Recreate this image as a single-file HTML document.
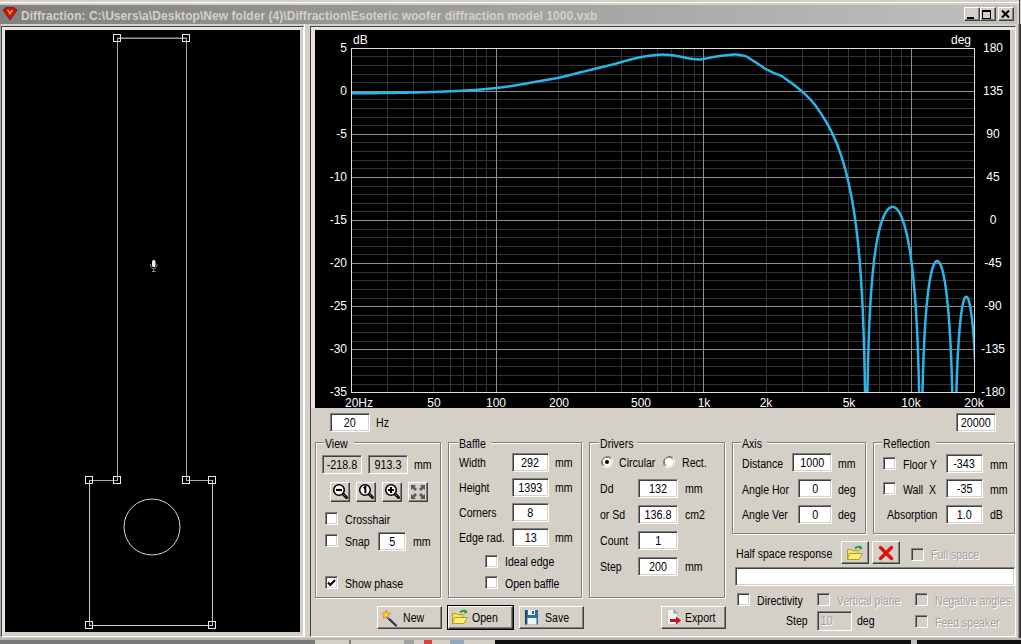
<!DOCTYPE html><html><head><meta charset="utf-8"><style>
*{box-sizing:border-box}
html,body{margin:0;padding:0}
body{width:1021px;height:644px;overflow:hidden;position:relative;background:#d4d0c8;font-family:"Liberation Sans",sans-serif;font-size:11px;color:#000}
.a{position:absolute}
.t{position:absolute;white-space:nowrap;line-height:13px}
.u{font-size:12px;transform:scaleX(.88);transform-origin:0 0}
.v{display:inline-block;font-size:12px;transform:scaleX(.9);position:relative;top:1px}
.ed{position:absolute;background:#fff;border:1px solid;border-color:#808080 #fff #fff #808080;box-shadow:inset 1px 1px #404040, inset -1px -1px #d4d0c8;text-align:center;line-height:17px;white-space:nowrap}
.ro{background:#d4d0c8}
.cb{position:absolute;width:13px;height:13px;background:#fff;border:1px solid;border-color:#808080 #fff #fff #808080;box-shadow:inset 1px 1px #404040, inset -1px -1px #d4d0c8}
.cbd{background:#d4d0c8}
.bt{position:absolute;background:#d4d0c8;border:1px solid;border-color:#fff #404040 #404040 #fff;box-shadow:inset -1px -1px #808080}
.grp{position:absolute;border:1px solid;border-color:#808080 #fff #fff #808080;box-shadow:inset 1px 1px #fff, inset -1px -1px #808080}
.gl{position:absolute;background:#d4d0c8;padding:0 2px;line-height:13px;white-space:nowrap}
.dis{color:#a0a0a0;text-shadow:1px 1px #fff}
</style></head><body>

<div class="a" style="left:0;top:2px;width:1019px;height:1px;background:#fff"></div>
<div class="a" style="left:0;top:5px;width:1017px;height:19px;background:linear-gradient(to right,#808080,#c0c0c0)"></div>
<div class="a" style="left:1019px;top:0;width:1px;height:644px;background:#404040"></div>
<div class="a" style="left:1020px;top:0;width:1px;height:24px;background:#d4d0c8"></div>
<div class="a" style="left:1020px;top:24px;width:1px;height:620px;background:#383838"></div>
<div class="a" style="left:1018px;top:24px;width:1px;height:614px;background:#9a9a9a"></div>
<svg class="a" style="left:2px;top:7px" width="16" height="14" viewBox="0 0 16 14"><path d="M1 3 L4 0.5 H12 L15 3 L8 13 Z" fill="#d01010" stroke="#801010" stroke-width="0.8"/><path d="M5 3 L8 8 L11 3 L9.5 3 L8 5.5 L6.5 3Z" fill="#ffd020"/></svg>
<div class="t" style="left:21px;top:10px;letter-spacing:.05px;font-weight:bold;color:#d4d0c8;font-size:12px" id="title">Diffraction: C:\Users\a\Desktop\New folder (4)\Diffraction\Esoteric woofer diffraction model 1000.vxb</div>
<div class="bt" style="left:964px;top:7px;width:16px;height:14px"></div>
<div class="bt" style="left:980px;top:7px;width:16px;height:14px"></div>
<div class="bt" style="left:998px;top:7px;width:16px;height:14px"></div>
<div class="a" style="left:967px;top:17px;width:7px;height:2px;background:#000"></div>
<div class="a" style="left:982px;top:10px;width:9px;height:9px;border:1px solid #000;border-top-width:2px"></div>
<svg class="a" style="left:1001px;top:10px" width="9" height="8" viewBox="0 0 9 8"><path d="M1 0.5 L8 7.5 M8 0.5 L1 7.5" stroke="#000" stroke-width="2"/></svg>
<div class="a" style="left:0;top:24px;width:1px;height:614px;background:#a8a8a8"></div>
<div class="a" style="left:1px;top:26px;width:303px;height:611px;border:1px solid;border-color:#404040 #fff #fff #404040"></div>
<div class="a" style="left:2px;top:27px;width:301px;height:609px;border:3px solid #e8e6e0;border-right-color:#d4d0c8;border-bottom-color:#d4d0c8"></div>
<div class="a" style="left:5px;top:30px;width:295px;height:602px;background:#000"></div>
<div class="a" style="left:304px;top:24px;width:1px;height:613px;background:#fff"></div>
<div class="a" style="left:310px;top:26px;width:706px;height:611px;border:1px solid;border-color:#404040 #fff #fff #404040"></div>
<div class="a" style="left:311px;top:27px;width:4px;height:381px;background:#e8e6e0"></div>
<div class="a" style="left:311px;top:27px;width:704px;height:3px;background:#e8e6e0"></div>
<div class="a" style="left:0;top:638px;width:1021px;height:2px;background:#b8b6b0"></div>
<div class="a" style="left:0;top:640px;width:315px;height:4px;background:#7a7a7a"></div>
<div class="a" style="left:349px;top:640px;width:2px;height:4px;background:#808080"></div>
<div class="a" style="left:404px;top:640px;width:10px;height:4px;background:#a0a0a0"></div>
<div class="a" style="left:424px;top:640px;width:8px;height:4px;background:#e04040"></div>
<div class="a" style="left:450px;top:640px;width:14px;height:4px;background:#90a8c0"></div>
<div class="a" style="left:495px;top:640px;width:526px;height:4px;background:#101010"></div>
<div class="a" style="left:911px;top:640px;width:6px;height:4px;background:#c0c0c0"></div>
<svg class="a" style="left:0;top:0" width="1021" height="644" viewBox="0 0 1021 644"><line x1="117" y1="38.2" x2="187" y2="38.2" stroke="#9a9a9a" stroke-width="1.6"/><line x1="117.5" y1="38" x2="117.5" y2="481" stroke="#a8a8a8" stroke-width="1"/><line x1="186.5" y1="38" x2="186.5" y2="481" stroke="#a8a8a8" stroke-width="1"/><line x1="89" y1="480.5" x2="118" y2="480.5" stroke="#a8a8a8" stroke-width="1"/><line x1="186" y1="480.5" x2="213" y2="480.5" stroke="#a8a8a8" stroke-width="1"/><line x1="89.5" y1="480" x2="89.5" y2="626" stroke="#c8c8c8" stroke-width="1"/><line x1="212.5" y1="480" x2="212.5" y2="626" stroke="#c8c8c8" stroke-width="1"/><line x1="89" y1="625.5" x2="213" y2="625.5" stroke="#c8c8c8" stroke-width="1"/><rect x="113.5" y="34.5" width="7" height="7" fill="none" stroke="#e8e8e8" stroke-width="1"/><rect x="182.5" y="34.5" width="7" height="7" fill="none" stroke="#e8e8e8" stroke-width="1"/><rect x="85.5" y="476.5" width="7" height="7" fill="none" stroke="#e8e8e8" stroke-width="1"/><rect x="113.5" y="476.5" width="7" height="7" fill="none" stroke="#e8e8e8" stroke-width="1"/><rect x="182.5" y="476.5" width="7" height="7" fill="none" stroke="#e8e8e8" stroke-width="1"/><rect x="208.5" y="476.5" width="7" height="7" fill="none" stroke="#e8e8e8" stroke-width="1"/><rect x="85.5" y="621.5" width="7" height="7" fill="none" stroke="#e8e8e8" stroke-width="1"/><rect x="208.5" y="621.5" width="7" height="7" fill="none" stroke="#e8e8e8" stroke-width="1"/><circle cx="152" cy="527" r="28" fill="none" stroke="#d8d8d8" stroke-width="1"/><rect x="152" y="260" width="3.5" height="7" rx="1.5" fill="#f0f0f0"/><path d="M150.5 264 Q150.5 268.5 153.8 268.5 Q157 268.5 157 264" fill="none" stroke="#909090" stroke-width="0.9"/><line x1="153.8" y1="268.5" x2="153.8" y2="271" stroke="#909090" stroke-width="1"/><line x1="152" y1="271.5" x2="155.5" y2="271.5" stroke="#909090" stroke-width="1"/><rect x="315" y="30" width="695" height="378" fill="#000"/><line x1="351" y1="56.5" x2="974" y2="56.5" stroke="#333333" stroke-width="1"/><line x1="351" y1="65.5" x2="974" y2="65.5" stroke="#333333" stroke-width="1"/><line x1="351" y1="74.5" x2="974" y2="74.5" stroke="#333333" stroke-width="1"/><line x1="351" y1="82.5" x2="974" y2="82.5" stroke="#333333" stroke-width="1"/><line x1="351" y1="99.5" x2="974" y2="99.5" stroke="#333333" stroke-width="1"/><line x1="351" y1="108.5" x2="974" y2="108.5" stroke="#333333" stroke-width="1"/><line x1="351" y1="117.5" x2="974" y2="117.5" stroke="#333333" stroke-width="1"/><line x1="351" y1="125.5" x2="974" y2="125.5" stroke="#333333" stroke-width="1"/><line x1="351" y1="142.5" x2="974" y2="142.5" stroke="#333333" stroke-width="1"/><line x1="351" y1="151.5" x2="974" y2="151.5" stroke="#333333" stroke-width="1"/><line x1="351" y1="160.5" x2="974" y2="160.5" stroke="#333333" stroke-width="1"/><line x1="351" y1="168.5" x2="974" y2="168.5" stroke="#333333" stroke-width="1"/><line x1="351" y1="186.5" x2="974" y2="186.5" stroke="#333333" stroke-width="1"/><line x1="351" y1="194.5" x2="974" y2="194.5" stroke="#333333" stroke-width="1"/><line x1="351" y1="203.5" x2="974" y2="203.5" stroke="#333333" stroke-width="1"/><line x1="351" y1="211.5" x2="974" y2="211.5" stroke="#333333" stroke-width="1"/><line x1="351" y1="229.5" x2="974" y2="229.5" stroke="#333333" stroke-width="1"/><line x1="351" y1="237.5" x2="974" y2="237.5" stroke="#333333" stroke-width="1"/><line x1="351" y1="246.5" x2="974" y2="246.5" stroke="#333333" stroke-width="1"/><line x1="351" y1="254.5" x2="974" y2="254.5" stroke="#333333" stroke-width="1"/><line x1="351" y1="272.5" x2="974" y2="272.5" stroke="#333333" stroke-width="1"/><line x1="351" y1="280.5" x2="974" y2="280.5" stroke="#333333" stroke-width="1"/><line x1="351" y1="289.5" x2="974" y2="289.5" stroke="#333333" stroke-width="1"/><line x1="351" y1="298.5" x2="974" y2="298.5" stroke="#333333" stroke-width="1"/><line x1="351" y1="315.5" x2="974" y2="315.5" stroke="#333333" stroke-width="1"/><line x1="351" y1="323.5" x2="974" y2="323.5" stroke="#333333" stroke-width="1"/><line x1="351" y1="332.5" x2="974" y2="332.5" stroke="#333333" stroke-width="1"/><line x1="351" y1="341.5" x2="974" y2="341.5" stroke="#333333" stroke-width="1"/><line x1="351" y1="358.5" x2="974" y2="358.5" stroke="#333333" stroke-width="1"/><line x1="351" y1="366.5" x2="974" y2="366.5" stroke="#333333" stroke-width="1"/><line x1="351" y1="375.5" x2="974" y2="375.5" stroke="#333333" stroke-width="1"/><line x1="351" y1="384.5" x2="974" y2="384.5" stroke="#333333" stroke-width="1"/><line x1="387.5" y1="48" x2="387.5" y2="392" stroke="#333333" stroke-width="1"/><line x1="413.5" y1="48" x2="413.5" y2="392" stroke="#333333" stroke-width="1"/><line x1="433.5" y1="48" x2="433.5" y2="392" stroke="#333333" stroke-width="1"/><line x1="450.5" y1="48" x2="450.5" y2="392" stroke="#333333" stroke-width="1"/><line x1="463.5" y1="48" x2="463.5" y2="392" stroke="#333333" stroke-width="1"/><line x1="476.5" y1="48" x2="476.5" y2="392" stroke="#333333" stroke-width="1"/><line x1="486.5" y1="48" x2="486.5" y2="392" stroke="#333333" stroke-width="1"/><line x1="558.5" y1="48" x2="558.5" y2="392" stroke="#333333" stroke-width="1"/><line x1="595.5" y1="48" x2="595.5" y2="392" stroke="#333333" stroke-width="1"/><line x1="621.5" y1="48" x2="621.5" y2="392" stroke="#333333" stroke-width="1"/><line x1="641.5" y1="48" x2="641.5" y2="392" stroke="#333333" stroke-width="1"/><line x1="657.5" y1="48" x2="657.5" y2="392" stroke="#333333" stroke-width="1"/><line x1="671.5" y1="48" x2="671.5" y2="392" stroke="#333333" stroke-width="1"/><line x1="683.5" y1="48" x2="683.5" y2="392" stroke="#333333" stroke-width="1"/><line x1="694.5" y1="48" x2="694.5" y2="392" stroke="#333333" stroke-width="1"/><line x1="766.5" y1="48" x2="766.5" y2="392" stroke="#333333" stroke-width="1"/><line x1="802.5" y1="48" x2="802.5" y2="392" stroke="#333333" stroke-width="1"/><line x1="828.5" y1="48" x2="828.5" y2="392" stroke="#333333" stroke-width="1"/><line x1="848.5" y1="48" x2="848.5" y2="392" stroke="#333333" stroke-width="1"/><line x1="865.5" y1="48" x2="865.5" y2="392" stroke="#333333" stroke-width="1"/><line x1="879.5" y1="48" x2="879.5" y2="392" stroke="#333333" stroke-width="1"/><line x1="891.5" y1="48" x2="891.5" y2="392" stroke="#333333" stroke-width="1"/><line x1="901.5" y1="48" x2="901.5" y2="392" stroke="#333333" stroke-width="1"/><line x1="351" y1="48.5" x2="974" y2="48.5" stroke="#909090" stroke-width="1"/><line x1="351" y1="91.5" x2="974" y2="91.5" stroke="#909090" stroke-width="1"/><line x1="351" y1="134.5" x2="974" y2="134.5" stroke="#909090" stroke-width="1"/><line x1="351" y1="177.5" x2="974" y2="177.5" stroke="#909090" stroke-width="1"/><line x1="351" y1="220.5" x2="974" y2="220.5" stroke="#909090" stroke-width="1"/><line x1="351" y1="263.5" x2="974" y2="263.5" stroke="#909090" stroke-width="1"/><line x1="351" y1="306.5" x2="974" y2="306.5" stroke="#909090" stroke-width="1"/><line x1="351" y1="349.5" x2="974" y2="349.5" stroke="#909090" stroke-width="1"/><line x1="351" y1="392.5" x2="974" y2="392.5" stroke="#909090" stroke-width="1"/><line x1="496.5" y1="48" x2="496.5" y2="392" stroke="#909090" stroke-width="1"/><line x1="703.5" y1="48" x2="703.5" y2="392" stroke="#909090" stroke-width="1"/><line x1="911.5" y1="48" x2="911.5" y2="392" stroke="#909090" stroke-width="1"/><rect x="351.5" y="48.5" width="623" height="344" fill="none" stroke="#e0e0e0" stroke-width="1"/><clipPath id="pc"><rect x="352" y="49" width="622" height="343"/></clipPath><g clip-path="url(#pc)" fill="none" stroke="#2ab4e8" stroke-width="2.5" stroke-linejoin="round"><path d="M351.0 93.32 L351.5 93.32 L352.0 93.32 L352.5 93.32 L353.0 93.32 L353.5 93.32 L354.0 93.32 L354.5 93.32 L355.0 93.32 L355.5 93.32 L356.0 93.32 L356.5 93.31 L357.0 93.31 L357.5 93.31 L358.0 93.31 L358.5 93.30 L359.0 93.30 L359.5 93.30 L360.0 93.30 L360.5 93.29 L361.0 93.29 L361.5 93.29 L362.0 93.28 L362.5 93.28 L363.0 93.28 L363.5 93.27 L364.0 93.27 L364.5 93.26 L365.0 93.26 L365.5 93.25 L366.0 93.25 L366.5 93.24 L367.0 93.24 L367.5 93.24 L368.0 93.23 L368.5 93.23 L369.0 93.22 L369.5 93.21 L370.0 93.21 L370.5 93.20 L371.0 93.20 L371.5 93.19 L372.0 93.19 L372.5 93.18 L373.0 93.17 L373.5 93.17 L374.0 93.16 L374.5 93.16 L375.0 93.15 L375.5 93.14 L376.0 93.14 L376.5 93.13 L377.0 93.13 L377.5 93.12 L378.0 93.11 L378.5 93.11 L379.0 93.10 L379.5 93.09 L380.0 93.09 L380.5 93.08 L381.0 93.07 L381.5 93.07 L382.0 93.06 L382.5 93.05 L383.0 93.05 L383.5 93.04 L384.0 93.03 L384.5 93.03 L385.0 93.02 L385.5 93.01 L386.0 93.01 L386.5 93.00 L387.0 92.99 L387.5 92.99 L388.0 92.98 L388.5 92.97 L389.0 92.97 L389.5 92.96 L390.0 92.95 L390.5 92.95 L391.0 92.94 L391.5 92.93 L392.0 92.93 L392.5 92.92 L393.0 92.91 L393.5 92.90 L394.0 92.90 L394.5 92.89 L395.0 92.88 L395.5 92.87 L396.0 92.86 L396.5 92.86 L397.0 92.85 L397.5 92.84 L398.0 92.83 L398.5 92.82 L399.0 92.81 L399.5 92.80 L400.0 92.79 L400.5 92.78 L401.0 92.78 L401.5 92.77 L402.0 92.76 L402.5 92.75 L403.0 92.74 L403.5 92.73 L404.0 92.72 L404.5 92.71 L405.0 92.70 L405.5 92.69 L406.0 92.68 L406.5 92.67 L407.0 92.66 L407.5 92.65 L408.0 92.64 L408.5 92.62 L409.0 92.61 L409.5 92.60 L410.0 92.59 L410.5 92.58 L411.0 92.57 L411.5 92.56 L412.0 92.55 L412.5 92.53 L413.0 92.52 L413.5 92.51 L414.0 92.50 L414.5 92.49 L415.0 92.48 L415.5 92.46 L416.0 92.45 L416.5 92.44 L417.0 92.43 L417.5 92.41 L418.0 92.40 L418.5 92.39 L419.0 92.38 L419.5 92.36 L420.0 92.35 L420.5 92.34 L421.0 92.32 L421.5 92.31 L422.0 92.30 L422.5 92.28 L423.0 92.27 L423.5 92.26 L424.0 92.24 L424.5 92.23 L425.0 92.21 L425.5 92.20 L426.0 92.19 L426.5 92.17 L427.0 92.16 L427.5 92.14 L428.0 92.13 L428.5 92.11 L429.0 92.10 L429.5 92.09 L430.0 92.07 L430.5 92.06 L431.0 92.04 L431.5 92.03 L432.0 92.01 L432.5 91.99 L433.0 91.98 L433.5 91.96 L434.0 91.95 L434.5 91.93 L435.0 91.91 L435.5 91.90 L436.0 91.88 L436.5 91.86 L437.0 91.85 L437.5 91.83 L438.0 91.81 L438.5 91.79 L439.0 91.77 L439.5 91.75 L440.0 91.74 L440.5 91.72 L441.0 91.70 L441.5 91.68 L442.0 91.66 L442.5 91.64 L443.0 91.62 L443.5 91.60 L444.0 91.58 L444.5 91.56 L445.0 91.54 L445.5 91.52 L446.0 91.49 L446.5 91.47 L447.0 91.45 L447.5 91.43 L448.0 91.41 L448.5 91.39 L449.0 91.36 L449.5 91.34 L450.0 91.32 L450.5 91.29 L451.0 91.27 L451.5 91.25 L452.0 91.22 L452.5 91.20 L453.0 91.18 L453.5 91.15 L454.0 91.13 L454.5 91.10 L455.0 91.08 L455.5 91.05 L456.0 91.03 L456.5 91.00 L457.0 90.98 L457.5 90.95 L458.0 90.92 L458.5 90.90 L459.0 90.87 L459.5 90.84 L460.0 90.82 L460.5 90.79 L461.0 90.76 L461.5 90.74 L462.0 90.71 L462.5 90.68 L463.0 90.65 L463.5 90.62 L464.0 90.60 L464.5 90.57 L465.0 90.54 L465.5 90.51 L466.0 90.48 L466.5 90.45 L467.0 90.42 L467.5 90.39 L468.0 90.36 L468.5 90.33 L469.0 90.30 L469.5 90.27 L470.0 90.24 L470.5 90.21 L471.0 90.18 L471.5 90.15 L472.0 90.12 L472.5 90.09 L473.0 90.05 L473.5 90.02 L474.0 89.99 L474.5 89.96 L475.0 89.93 L475.5 89.89 L476.0 89.86 L476.5 89.82 L477.0 89.79 L477.5 89.75 L478.0 89.71 L478.5 89.68 L479.0 89.64 L479.5 89.60 L480.0 89.56 L480.5 89.52 L481.0 89.48 L481.5 89.44 L482.0 89.39 L482.5 89.35 L483.0 89.31 L483.5 89.27 L484.0 89.22 L484.5 89.18 L485.0 89.13 L485.5 89.09 L486.0 89.04 L486.5 88.99 L487.0 88.95 L487.5 88.90 L488.0 88.85 L488.5 88.80 L489.0 88.75 L489.5 88.71 L490.0 88.66 L490.5 88.61 L491.0 88.55 L491.5 88.50 L492.0 88.45 L492.5 88.40 L493.0 88.35 L493.5 88.30 L494.0 88.24 L494.5 88.19 L495.0 88.14 L495.5 88.08 L496.0 88.03 L496.5 87.97 L497.0 87.92 L497.5 87.86 L498.0 87.80 L498.5 87.74 L499.0 87.68 L499.5 87.62 L500.0 87.56 L500.5 87.50 L501.0 87.43 L501.5 87.37 L502.0 87.30 L502.5 87.24 L503.0 87.17 L503.5 87.11 L504.0 87.04 L504.5 86.97 L505.0 86.90 L505.5 86.83 L506.0 86.76 L506.5 86.69 L507.0 86.62 L507.5 86.54 L508.0 86.47 L508.5 86.40 L509.0 86.33 L509.5 86.25 L510.0 86.18 L510.5 86.10 L511.0 86.03 L511.5 85.95 L512.0 85.88 L512.5 85.80 L513.0 85.72 L513.5 85.65 L514.0 85.57 L514.5 85.49 L515.0 85.41 L515.5 85.34 L516.0 85.26 L516.5 85.18 L517.0 85.10 L517.5 85.02 L518.0 84.95 L518.5 84.87 L519.0 84.79 L519.5 84.70 L520.0 84.62 L520.5 84.54 L521.0 84.45 L521.5 84.37 L522.0 84.28 L522.5 84.20 L523.0 84.11 L523.5 84.02 L524.0 83.94 L524.5 83.85 L525.0 83.76 L525.5 83.67 L526.0 83.58 L526.5 83.49 L527.0 83.40 L527.5 83.31 L528.0 83.22 L528.5 83.13 L529.0 83.03 L529.5 82.94 L530.0 82.85 L530.5 82.76 L531.0 82.67 L531.5 82.57 L532.0 82.48 L532.5 82.39 L533.0 82.30 L533.5 82.21 L534.0 82.11 L534.5 82.02 L535.0 81.93 L535.5 81.84 L536.0 81.75 L536.5 81.66 L537.0 81.57 L537.5 81.48 L538.0 81.39 L538.5 81.30 L539.0 81.21 L539.5 81.12 L540.0 81.03 L540.5 80.94 L541.0 80.86 L541.5 80.77 L542.0 80.69 L542.5 80.60 L543.0 80.52 L543.5 80.43 L544.0 80.35 L544.5 80.26 L545.0 80.18 L545.5 80.10 L546.0 80.01 L546.5 79.93 L547.0 79.85 L547.5 79.76 L548.0 79.68 L548.5 79.60 L549.0 79.51 L549.5 79.43 L550.0 79.34 L550.5 79.26 L551.0 79.17 L551.5 79.08 L552.0 79.00 L552.5 78.91 L553.0 78.82 L553.5 78.73 L554.0 78.64 L554.5 78.55 L555.0 78.46 L555.5 78.37 L556.0 78.27 L556.5 78.18 L557.0 78.08 L557.5 77.99 L558.0 77.89 L558.5 77.79 L559.0 77.69 L559.5 77.58 L560.0 77.48 L560.5 77.37 L561.0 77.27 L561.5 77.16 L562.0 77.04 L562.5 76.93 L563.0 76.81 L563.5 76.69 L564.0 76.57 L564.5 76.45 L565.0 76.33 L565.5 76.20 L566.0 76.08 L566.5 75.95 L567.0 75.82 L567.5 75.69 L568.0 75.56 L568.5 75.43 L569.0 75.30 L569.5 75.17 L570.0 75.03 L570.5 74.90 L571.0 74.77 L571.5 74.63 L572.0 74.50 L572.5 74.37 L573.0 74.24 L573.5 74.10 L574.0 73.97 L574.5 73.84 L575.0 73.71 L575.5 73.58 L576.0 73.45 L576.5 73.32 L577.0 73.20 L577.5 73.07 L578.0 72.95 L578.5 72.82 L579.0 72.70 L579.5 72.58 L580.0 72.45 L580.5 72.33 L581.0 72.21 L581.5 72.09 L582.0 71.96 L582.5 71.84 L583.0 71.72 L583.5 71.60 L584.0 71.48 L584.5 71.36 L585.0 71.24 L585.5 71.11 L586.0 70.99 L586.5 70.87 L587.0 70.75 L587.5 70.63 L588.0 70.51 L588.5 70.39 L589.0 70.27 L589.5 70.15 L590.0 70.03 L590.5 69.90 L591.0 69.78 L591.5 69.66 L592.0 69.54 L592.5 69.42 L593.0 69.30 L593.5 69.17 L594.0 69.05 L594.5 68.93 L595.0 68.81 L595.5 68.69 L596.0 68.56 L596.5 68.44 L597.0 68.32 L597.5 68.20 L598.0 68.07 L598.5 67.95 L599.0 67.83 L599.5 67.71 L600.0 67.59 L600.5 67.47 L601.0 67.35 L601.5 67.23 L602.0 67.11 L602.5 66.98 L603.0 66.86 L603.5 66.74 L604.0 66.62 L604.5 66.50 L605.0 66.38 L605.5 66.26 L606.0 66.13 L606.5 66.01 L607.0 65.89 L607.5 65.77 L608.0 65.64 L608.5 65.52 L609.0 65.39 L609.5 65.27 L610.0 65.14 L610.5 65.02 L611.0 64.89 L611.5 64.77 L612.0 64.64 L612.5 64.51 L613.0 64.38 L613.5 64.25 L614.0 64.12 L614.5 63.99 L615.0 63.86 L615.5 63.73 L616.0 63.59 L616.5 63.46 L617.0 63.32 L617.5 63.18 L618.0 63.04 L618.5 62.90 L619.0 62.75 L619.5 62.61 L620.0 62.46 L620.5 62.32 L621.0 62.17 L621.5 62.03 L622.0 61.89 L622.5 61.74 L623.0 61.60 L623.5 61.45 L624.0 61.31 L624.5 61.17 L625.0 61.03 L625.5 60.89 L626.0 60.75 L626.5 60.61 L627.0 60.48 L627.5 60.34 L628.0 60.21 L628.5 60.08 L629.0 59.96 L629.5 59.83 L630.0 59.70 L630.5 59.57 L631.0 59.44 L631.5 59.31 L632.0 59.19 L632.5 59.06 L633.0 58.93 L633.5 58.81 L634.0 58.68 L634.5 58.56 L635.0 58.43 L635.5 58.31 L636.0 58.19 L636.5 58.07 L637.0 57.95 L637.5 57.84 L638.0 57.73 L638.5 57.62 L639.0 57.51 L639.5 57.40 L640.0 57.30 L640.5 57.20 L641.0 57.11 L641.5 57.01 L642.0 56.92 L642.5 56.84 L643.0 56.75 L643.5 56.67 L644.0 56.58 L644.5 56.50 L645.0 56.42 L645.5 56.34 L646.0 56.26 L646.5 56.19 L647.0 56.11 L647.5 56.04 L648.0 55.97 L648.5 55.89 L649.0 55.83 L649.5 55.76 L650.0 55.69 L650.5 55.63 L651.0 55.57 L651.5 55.51 L652.0 55.45 L652.5 55.39 L653.0 55.34 L653.5 55.29 L654.0 55.24 L654.5 55.19 L655.0 55.14 L655.5 55.10 L656.0 55.06 L656.5 55.02 L657.0 54.98 L657.5 54.94 L658.0 54.90 L658.5 54.85 L659.0 54.81 L659.5 54.77 L660.0 54.74 L660.5 54.71 L661.0 54.68 L661.5 54.65 L662.0 54.63 L662.5 54.62 L663.0 54.62 L663.5 54.62 L664.0 54.63 L664.5 54.64 L665.0 54.67 L665.5 54.69 L666.0 54.72 L666.5 54.75 L667.0 54.79 L667.5 54.83 L668.0 54.87 L668.5 54.91 L669.0 54.95 L669.5 55.00 L670.0 55.05 L670.5 55.10 L671.0 55.15 L671.5 55.20 L672.0 55.25 L672.5 55.30 L673.0 55.36 L673.5 55.42 L674.0 55.49 L674.5 55.56 L675.0 55.64 L675.5 55.72 L676.0 55.81 L676.5 55.90 L677.0 56.00 L677.5 56.09 L678.0 56.19 L678.5 56.29 L679.0 56.39 L679.5 56.50 L680.0 56.60 L680.5 56.70 L681.0 56.80 L681.5 56.91 L682.0 57.01 L682.5 57.10 L683.0 57.20 L683.5 57.29 L684.0 57.38 L684.5 57.48 L685.0 57.58 L685.5 57.69 L686.0 57.79 L686.5 57.90 L687.0 58.00 L687.5 58.11 L688.0 58.21 L688.5 58.31 L689.0 58.40 L689.5 58.49 L690.0 58.57 L690.5 58.65 L691.0 58.71 L691.5 58.77 L692.0 58.83 L692.5 58.88 L693.0 58.93 L693.5 58.98 L694.0 59.03 L694.5 59.08 L695.0 59.13 L695.5 59.18 L696.0 59.23 L696.5 59.27 L697.0 59.31 L697.5 59.36 L698.0 59.40 L698.5 59.43 L699.0 59.45 L699.5 59.44 L700.0 59.42 L700.5 59.37 L701.0 59.31 L701.5 59.24 L702.0 59.16 L702.5 59.07 L703.0 58.99 L703.5 58.91 L704.0 58.84 L704.5 58.77 L705.0 58.69 L705.5 58.61 L706.0 58.53 L706.5 58.44 L707.0 58.34 L707.5 58.24 L708.0 58.14 L708.5 58.04 L709.0 57.94 L709.5 57.83 L710.0 57.72 L710.5 57.62 L711.0 57.51 L711.5 57.41 L712.0 57.30 L712.5 57.20 L713.0 57.10 L713.5 57.01 L714.0 56.92 L714.5 56.83 L715.0 56.74 L715.5 56.66 L716.0 56.59 L716.5 56.51 L717.0 56.43 L717.5 56.36 L718.0 56.28 L718.5 56.21 L719.0 56.14 L719.5 56.07 L720.0 56.00 L720.5 55.94 L721.0 55.87 L721.5 55.81 L722.0 55.74 L722.5 55.68 L723.0 55.62 L723.5 55.57 L724.0 55.51 L724.5 55.46 L725.0 55.41 L725.5 55.36 L726.0 55.31 L726.5 55.26 L727.0 55.21 L727.5 55.15 L728.0 55.10 L728.5 55.04 L729.0 54.98 L729.5 54.92 L730.0 54.86 L730.5 54.80 L731.0 54.75 L731.5 54.70 L732.0 54.65 L732.5 54.61 L733.0 54.58 L733.5 54.55 L734.0 54.53 L734.5 54.52 L735.0 54.53 L735.5 54.54 L736.0 54.57 L736.5 54.61 L737.0 54.66 L737.5 54.72 L738.0 54.79 L738.5 54.85 L739.0 54.92 L739.5 54.99 L740.0 55.07 L740.5 55.14 L741.0 55.22 L741.5 55.30 L742.0 55.39 L742.5 55.48 L743.0 55.57 L743.5 55.67 L744.0 55.77 L744.5 55.87 L745.0 56.00 L745.5 56.17 L746.0 56.38 L746.5 56.61 L747.0 56.88 L747.5 57.16 L748.0 57.47 L748.5 57.79 L749.0 58.12 L749.5 58.45 L750.0 58.78 L750.5 59.11 L751.0 59.43 L751.5 59.73 L752.0 60.03 L752.5 60.33 L753.0 60.65 L753.5 60.96 L754.0 61.28 L754.5 61.60 L755.0 61.93 L755.5 62.25 L756.0 62.58 L756.5 62.91 L757.0 63.25 L757.5 63.58 L758.0 63.91 L758.5 64.24 L759.0 64.57 L759.5 64.90 L760.0 65.22 L760.5 65.56 L761.0 65.90 L761.5 66.25 L762.0 66.60 L762.5 66.95 L763.0 67.30 L763.5 67.64 L764.0 67.98 L764.5 68.30 L765.0 68.62 L765.5 68.91 L766.0 69.18 L766.5 69.44 L767.0 69.69 L767.5 69.94 L768.0 70.19 L768.5 70.44 L769.0 70.69 L769.5 70.94 L770.0 71.18 L770.5 71.43 L771.0 71.67 L771.5 71.91 L772.0 72.14 L772.5 72.37 L773.0 72.60 L773.5 72.82 L774.0 73.04 L774.5 73.25 L775.0 73.44 L775.5 73.63 L776.0 73.81 L776.5 73.99 L777.0 74.17 L777.5 74.35 L778.0 74.53 L778.5 74.71 L779.0 74.90 L779.5 75.11 L780.0 75.32 L780.5 75.55 L781.0 75.80 L781.5 76.06 L782.0 76.35 L782.5 76.66 L783.0 76.98 L783.5 77.32 L784.0 77.66 L784.5 78.02 L785.0 78.38 L785.5 78.75 L786.0 79.12 L786.5 79.48 L787.0 79.84 L787.5 80.20 L788.0 80.55 L788.5 80.89 L789.0 81.23 L789.5 81.58 L790.0 81.94 L790.5 82.29 L791.0 82.65 L791.5 83.02 L792.0 83.39 L792.5 83.76 L793.0 84.13 L793.5 84.51 L794.0 84.89 L794.5 85.28 L795.0 85.67 L795.5 86.06 L796.0 86.45 L796.5 86.85 L797.0 87.25 L797.5 87.66 L798.0 88.06 L798.5 88.48 L799.0 88.89 L799.5 89.31 L800.0 89.73 L800.5 90.15 L801.0 90.58 L801.5 91.01 L802.0 91.44 L802.5 91.88 L803.0 92.32 L803.5 92.76 L804.0 93.21 L804.5 93.67 L805.0 94.13 L805.5 94.59 L806.0 95.06 L806.5 95.54 L807.0 96.03 L807.5 96.52 L808.0 97.01 L808.5 97.52 L809.0 98.03 L809.5 98.55 L810.0 99.08 L810.5 99.62 L811.0 100.17 L811.5 100.72 L812.0 101.29 L812.5 101.86 L813.0 102.45 L813.5 103.05 L814.0 103.66 L814.5 104.30 L815.0 104.95 L815.5 105.62 L816.0 106.30 L816.5 106.99 L817.0 107.70 L817.5 108.41 L818.0 109.14 L818.5 109.87 L819.0 110.61 L819.5 111.35 L820.0 112.10 L820.5 112.85 L821.0 113.61 L821.5 114.37 L822.0 115.13 L822.5 115.90 L823.0 116.68 L823.5 117.47 L824.0 118.26 L824.5 119.07 L825.0 119.89 L825.5 120.72 L826.0 121.56 L826.5 122.42 L827.0 123.29 L827.5 124.17 L828.0 125.06 L828.5 125.97 L829.0 126.90 L829.5 127.84 L830.0 128.81 L830.5 129.78 L831.0 130.78 L831.5 131.80 L832.0 132.83 L832.5 133.87 L833.0 134.94 L833.5 136.02 L834.0 137.12 L834.5 138.24 L835.0 139.39 L835.5 140.55 L836.0 141.74 L836.5 142.96 L837.0 144.20 L837.5 145.46 L838.0 146.76 L838.5 148.09 L839.0 149.45 L839.5 150.83 L840.0 152.25 L840.5 153.70 L841.0 155.19 L841.5 156.71 L842.0 158.26 L842.5 159.85 L843.0 161.48 L843.5 163.15 L844.0 164.86 L844.5 166.62 L845.0 168.42 L845.5 170.27 L846.0 172.16 L846.5 174.11 L847.0 176.11 L847.5 178.17 L848.0 180.29 L848.5 182.47 L849.0 184.71 L849.5 187.02 L850.0 189.40 L850.5 191.86 L851.0 194.40 L851.5 197.03 L852.0 199.75 L852.5 202.57 L853.0 205.51 L853.5 208.56 L854.0 211.74 L854.5 215.05 L855.0 218.52 L855.5 222.15 L856.0 225.95 L856.5 229.94 L857.0 234.14 L857.5 238.56 L858.0 243.25 L858.5 248.22 L859.0 253.51 L859.5 259.17 L860.0 265.26 L860.5 271.84 L861.0 279.01 L861.5 286.87 L862.0 295.59 L862.5 305.38 L863.0 316.55 L863.5 329.56 L864.0 345.17 L864.5 364.70 L865.0 390.89 L865.5 420.00M867.5 420.00 L867.5 388.57 L868.0 364.53 L868.5 346.59 L869.0 332.32 L869.5 320.49 L870.0 310.43 L870.5 301.70 L871.0 294.00 L871.5 287.14 L872.0 280.97 L872.5 275.36 L873.0 270.25 L873.5 265.57 L874.0 261.25 L874.5 257.25 L875.0 253.54 L875.5 250.09 L876.0 246.88 L876.5 243.87 L877.0 241.06 L877.5 238.43 L878.0 235.96 L878.5 233.64 L879.0 231.46 L879.5 229.42 L880.0 227.49 L880.5 225.69 L881.0 223.99 L881.5 222.40 L882.0 220.90 L882.5 219.50 L883.0 218.19 L883.5 216.97 L884.0 215.83 L884.5 214.76 L885.0 213.77 L885.5 212.86 L886.0 212.02 L886.5 211.25 L887.0 210.54 L887.5 209.90 L888.0 209.32 L888.5 208.81 L889.0 208.36 L889.5 207.97 L890.0 207.64 L890.5 207.36 L891.0 207.15 L891.5 206.99 L892.0 206.89 L892.5 206.85 L893.0 206.87 L893.5 206.95 L894.0 207.10 L894.5 207.30 L895.0 207.56 L895.5 207.88 L896.0 208.27 L896.5 208.72 L897.0 209.23 L897.5 209.81 L898.0 210.45 L898.5 211.16 L899.0 211.94 L899.5 212.79 L900.0 213.71 L900.5 214.70 L901.0 215.76 L901.5 216.90 L902.0 218.13 L902.5 219.43 L903.0 220.82 L903.5 222.29 L904.0 223.86 L904.5 225.52 L905.0 227.28 L905.5 229.14 L906.0 231.12 L906.5 233.20 L907.0 235.41 L907.5 237.74 L908.0 240.21 L908.5 242.82 L909.0 245.58 L909.5 248.51 L910.0 251.61 L910.5 254.91 L911.0 258.41 L911.5 262.14 L912.0 266.11 L912.5 270.36 L913.0 274.91 L913.5 279.80 L914.0 285.08 L914.5 290.80 L915.0 297.03 L915.5 303.85 L916.0 311.39 L916.5 319.78 L917.0 329.25 L917.5 340.08 L918.0 352.72 L918.5 367.89 L919.0 386.83 L919.5 412.10 L920.0 420.00M922.0 420.00 L922.0 415.46 L922.5 390.68 L923.0 372.38 L923.5 357.94 L924.0 346.07 L924.5 336.04 L925.0 327.41 L925.5 319.87 L926.0 313.20 L926.5 307.27 L927.0 301.95 L927.5 297.16 L928.0 292.83 L928.5 288.91 L929.0 285.35 L929.5 282.12 L930.0 279.19 L930.5 276.54 L931.0 274.13 L931.5 271.97 L932.0 270.03 L932.5 268.30 L933.0 266.77 L933.5 265.43 L934.0 264.28 L934.5 263.30 L935.0 262.50 L935.5 261.87 L936.0 261.40 L936.5 261.10 L937.0 260.96 L937.5 260.98 L938.0 261.17 L938.5 261.51 L939.0 262.03 L939.5 262.71 L940.0 263.56 L940.5 264.59 L941.0 265.80 L941.5 267.19 L942.0 268.77 L942.5 270.56 L943.0 272.55 L943.5 274.76 L944.0 277.21 L944.5 279.91 L945.0 282.88 L945.5 286.13 L946.0 289.69 L946.5 293.60 L947.0 297.89 L947.5 302.60 L948.0 307.79 L948.5 313.53 L949.0 319.89 L949.5 327.00 L950.0 335.00 L950.5 344.10 L951.0 354.59 L951.5 366.91 L952.0 381.76 L952.5 400.37 L953.0 420.00M956.0 420.00 L956.0 405.74 L956.5 387.43 L957.0 373.08 L957.5 361.39 L958.0 351.61 L958.5 343.28 L959.0 336.10 L959.5 329.86 L960.0 324.42 L960.5 319.64 L961.0 315.46 L961.5 311.80 L962.0 308.62 L962.5 305.87 L963.0 303.52 L963.5 301.54 L964.0 299.92 L964.5 298.64 L965.0 297.69 L965.5 297.05 L966.0 296.73 L966.5 296.72 L967.0 297.02 L967.5 297.63 L968.0 298.56 L968.5 299.82 L969.0 301.41 L969.5 303.36 L970.0 305.68 L970.5 308.39 L971.0 311.52 L971.5 315.11 L972.0 319.21 L972.5 323.86 L973.0 329.15 L973.5 335.16 L974.0 342.01 L974.5 349.88 L975.0 358.99 L975.5 369.68"/></g></svg>
<div class="t" style="right:674px;top:41px;color:#fff;font-size:12px;line-height:14px">5</div>
<div class="t" style="right:674px;top:84px;color:#fff;font-size:12px;line-height:14px">0</div>
<div class="t" style="right:674px;top:127px;color:#fff;font-size:12px;line-height:14px">-5</div>
<div class="t" style="right:674px;top:170px;color:#fff;font-size:12px;line-height:14px">-10</div>
<div class="t" style="right:674px;top:213px;color:#fff;font-size:12px;line-height:14px">-15</div>
<div class="t" style="right:674px;top:256px;color:#fff;font-size:12px;line-height:14px">-20</div>
<div class="t" style="right:674px;top:299px;color:#fff;font-size:12px;line-height:14px">-25</div>
<div class="t" style="right:674px;top:342px;color:#fff;font-size:12px;line-height:14px">-30</div>
<div class="t" style="right:674px;top:385px;color:#fff;font-size:12px;line-height:14px">-35</div>
<div class="t" style="left:953px;width:80px;text-align:center;top:41px;color:#fff;font-size:12px;line-height:14px">180</div>
<div class="t" style="left:953px;width:80px;text-align:center;top:84px;color:#fff;font-size:12px;line-height:14px">135</div>
<div class="t" style="left:953px;width:80px;text-align:center;top:127px;color:#fff;font-size:12px;line-height:14px">90</div>
<div class="t" style="left:953px;width:80px;text-align:center;top:170px;color:#fff;font-size:12px;line-height:14px">45</div>
<div class="t" style="left:953px;width:80px;text-align:center;top:213px;color:#fff;font-size:12px;line-height:14px">0</div>
<div class="t" style="left:953px;width:80px;text-align:center;top:256px;color:#fff;font-size:12px;line-height:14px">-45</div>
<div class="t" style="left:953px;width:80px;text-align:center;top:299px;color:#fff;font-size:12px;line-height:14px">-90</div>
<div class="t" style="left:953px;width:80px;text-align:center;top:342px;color:#fff;font-size:12px;line-height:14px">-135</div>
<div class="t" style="left:953px;width:80px;text-align:center;top:385px;color:#fff;font-size:12px;line-height:14px">-180</div>
<div class="t" style="left:353px;top:33px;color:#fff;font-size:12px;line-height:14px">dB</div>
<div class="t" style="left:951px;top:33px;color:#fff;font-size:12px;line-height:14px">deg</div>
<div class="t" style="left:345px;top:396px;color:#fff;font-size:12px;line-height:14px">20Hz</div>
<div class="t" style="left:394px;width:80px;text-align:center;top:396px;color:#fff;font-size:12px;line-height:14px">50</div>
<div class="t" style="left:456px;width:80px;text-align:center;top:396px;color:#fff;font-size:12px;line-height:14px">100</div>
<div class="t" style="left:519px;width:80px;text-align:center;top:396px;color:#fff;font-size:12px;line-height:14px">200</div>
<div class="t" style="left:601px;width:80px;text-align:center;top:396px;color:#fff;font-size:12px;line-height:14px">500</div>
<div class="t" style="left:664px;width:80px;text-align:center;top:396px;color:#fff;font-size:12px;line-height:14px">1k</div>
<div class="t" style="left:726px;width:80px;text-align:center;top:396px;color:#fff;font-size:12px;line-height:14px">2k</div>
<div class="t" style="left:809px;width:80px;text-align:center;top:396px;color:#fff;font-size:12px;line-height:14px">5k</div>
<div class="t" style="left:871px;width:80px;text-align:center;top:396px;color:#fff;font-size:12px;line-height:14px">10k</div>
<div class="t" style="left:934px;width:80px;text-align:center;top:396px;color:#fff;font-size:12px;line-height:14px">20k</div>
<div class="ed" style="left:330px;top:413px;width:40px;height:19px;"><span class="v">20</span></div>
<div class="t u " style="left:376px;top:417px">Hz</div>
<div class="ed" style="left:956px;top:413px;width:40px;height:19px;"><span class="v">20000</span></div>
<div class="a" style="left:316px;top:443px;width:126px;height:156px;border:1px solid #fff"></div>
<div class="a" style="left:315px;top:442px;width:126px;height:156px;border:1px solid #808080"></div>
<div class="a" style="left:324px;top:440px;width:30px;height:5px;background:#d4d0c8"></div>
<div class="t u " style="left:325px;top:438px">View</div>
<div class="a" style="left:449px;top:443px;width:134px;height:156px;border:1px solid #fff"></div>
<div class="a" style="left:448px;top:442px;width:134px;height:156px;border:1px solid #808080"></div>
<div class="a" style="left:458px;top:440px;width:33px;height:5px;background:#d4d0c8"></div>
<div class="t u " style="left:459px;top:438px">Baffle</div>
<div class="a" style="left:590px;top:443px;width:136px;height:156px;border:1px solid #fff"></div>
<div class="a" style="left:589px;top:442px;width:136px;height:156px;border:1px solid #808080"></div>
<div class="a" style="left:599px;top:440px;width:39px;height:5px;background:#d4d0c8"></div>
<div class="t u " style="left:600px;top:438px">Drivers</div>
<div class="a" style="left:733px;top:443px;width:134px;height:92px;border:1px solid #fff"></div>
<div class="a" style="left:732px;top:442px;width:134px;height:92px;border:1px solid #808080"></div>
<div class="a" style="left:741px;top:440px;width:26px;height:5px;background:#d4d0c8"></div>
<div class="t u " style="left:742px;top:438px">Axis</div>
<div class="a" style="left:874px;top:443px;width:142px;height:92px;border:1px solid #fff"></div>
<div class="a" style="left:873px;top:442px;width:142px;height:92px;border:1px solid #808080"></div>
<div class="a" style="left:882px;top:440px;width:54px;height:5px;background:#d4d0c8"></div>
<div class="t u " style="left:883px;top:438px">Reflection</div>
<div class="ed ro" style="left:322px;top:455px;width:40px;height:19px;"><span class="v">-218.8</span></div>
<div class="ed ro" style="left:368px;top:455px;width:40px;height:19px;"><span class="v">913.3</span></div>
<div class="t u " style="left:414px;top:459px">mm</div>
<div class="bt" style="left:330px;top:482px;width:20px;height:20px"></div>
<div class="bt" style="left:356px;top:482px;width:20px;height:20px"></div>
<div class="bt" style="left:382px;top:482px;width:20px;height:20px"></div>
<div class="bt" style="left:408px;top:482px;width:20px;height:20px"></div>
<svg class="a" style="left:331px;top:482px" width="18" height="18" viewBox="0 0 18 18"><path d="M11 11 L15.5 15.5" stroke="#000" stroke-width="3" stroke-linecap="round"/><path d="M11.5 11.5 L14.5 14.5" stroke="#707070" stroke-width="1"/><circle cx="8" cy="8" r="5.3" fill="#fff" stroke="#000" stroke-width="1.6"/><path d="M5 8 H11" stroke="#000" stroke-width="2.2"/></svg>
<svg class="a" style="left:357px;top:482px" width="18" height="18" viewBox="0 0 18 18"><path d="M11 11 L15.5 15.5" stroke="#000" stroke-width="3" stroke-linecap="round"/><path d="M11.5 11.5 L14.5 14.5" stroke="#707070" stroke-width="1"/><circle cx="8" cy="8" r="5.3" fill="#fff" stroke="#000" stroke-width="1.6"/><path d="M6.6 6.2 L8.4 4.8 V11.2" fill="none" stroke="#000" stroke-width="2"/></svg>
<svg class="a" style="left:383px;top:482px" width="18" height="18" viewBox="0 0 18 18"><path d="M11 11 L15.5 15.5" stroke="#000" stroke-width="3" stroke-linecap="round"/><path d="M11.5 11.5 L14.5 14.5" stroke="#707070" stroke-width="1"/><circle cx="8" cy="8" r="5.3" fill="#fff" stroke="#000" stroke-width="1.6"/><path d="M5 8 H11 M8 5 V11" stroke="#000" stroke-width="2.2"/></svg>
<svg class="a" style="left:410px;top:484px" width="16" height="16" viewBox="0 0 16 16" fill="#5a5a5a"><path d="M1 1 H6 L4.5 2.5 L7 5 L5 7 L2.5 4.5 L1 6Z"/><path d="M15 1 V6 L13.5 4.5 L11 7 L9 5 L11.5 2.5 L10 1Z"/><path d="M1 15 V10 L2.5 11.5 L5 9 L7 11 L4.5 13.5 L6 15Z"/><path d="M15 15 H10 L11.5 13.5 L9 11 L11 9 L13.5 11.5 L15 10Z"/></svg>
<div class="cb" style="left:325px;top:512px"></div>
<div class="t u " style="left:345px;top:514px">Crosshair</div>
<div class="cb" style="left:325px;top:534px"></div>
<div class="t u " style="left:345px;top:536px">Snap</div>
<div class="ed" style="left:378px;top:532px;width:28px;height:19px;"><span class="v">5</span></div>
<div class="t u " style="left:413px;top:536px">mm</div>
<div class="cb" style="left:325px;top:576px"></div>
<svg class="a" style="left:327px;top:579px" width="9" height="8" viewBox="0 0 9 8"><path d="M1 3.5 L3.3 6 L8 1" fill="none" stroke="#000" stroke-width="2"/></svg>
<div class="t u " style="left:345px;top:578px">Show phase</div>
<div class="t u " style="left:459px;top:457px">Width</div>
<div class="ed" style="left:512px;top:453px;width:37px;height:19px;"><span class="v">292</span></div>
<div class="t u " style="left:555px;top:457px">mm</div>
<div class="t u " style="left:459px;top:482px">Height</div>
<div class="ed" style="left:512px;top:478px;width:37px;height:19px;"><span class="v">1393</span></div>
<div class="t u " style="left:555px;top:482px">mm</div>
<div class="t u " style="left:459px;top:507px">Corners</div>
<div class="ed" style="left:512px;top:503px;width:37px;height:19px;"><span class="v">8</span></div>
<div class="t u " style="left:459px;top:532px">Edge rad.</div>
<div class="ed" style="left:512px;top:528px;width:37px;height:19px;"><span class="v">13</span></div>
<div class="t u " style="left:555px;top:532px">mm</div>
<div class="cb" style="left:485px;top:555px"></div>
<div class="t u " style="left:505px;top:556px">Ideal edge</div>
<div class="cb" style="left:485px;top:576px"></div>
<div class="t u " style="left:505px;top:578px">Open baffle</div>
<svg class="a" style="left:601px;top:456px" width="12" height="12" viewBox="0 0 12 12"><path d="M10.2 1.8 A6 6 0 0 0 1.8 10.2" fill="none" stroke="#808080" stroke-width="1"/><path d="M9.3 2.7 A4.7 4.7 0 0 0 2.7 9.3" fill="none" stroke="#404040" stroke-width="1"/><path d="M1.8 10.2 A6 6 0 0 0 10.2 1.8" fill="none" stroke="#fff" stroke-width="1"/><circle cx="6" cy="6" r="4.2" fill="#fff"/><circle cx="6" cy="6" r="2" fill="#000"/></svg>
<div class="t u " style="left:619px;top:457px">Circular</div>
<svg class="a" style="left:663px;top:456px" width="12" height="12" viewBox="0 0 12 12"><path d="M10.2 1.8 A6 6 0 0 0 1.8 10.2" fill="none" stroke="#808080" stroke-width="1"/><path d="M9.3 2.7 A4.7 4.7 0 0 0 2.7 9.3" fill="none" stroke="#404040" stroke-width="1"/><path d="M1.8 10.2 A6 6 0 0 0 10.2 1.8" fill="none" stroke="#fff" stroke-width="1"/><circle cx="6" cy="6" r="4.2" fill="#fff"/></svg>
<div class="t u " style="left:682px;top:457px">Rect.</div>
<div class="t u " style="left:600px;top:483px">Dd</div>
<div class="ed" style="left:638px;top:479px;width:40px;height:19px;"><span class="v">132</span></div>
<div class="t u " style="left:685px;top:483px">mm</div>
<div class="t u " style="left:600px;top:509px">or Sd</div>
<div class="ed" style="left:638px;top:505px;width:40px;height:19px;"><span class="v">136.8</span></div>
<div class="t u " style="left:685px;top:509px">cm2</div>
<div class="t u " style="left:600px;top:535px">Count</div>
<div class="ed" style="left:638px;top:531px;width:40px;height:19px;"><span class="v">1</span></div>
<div class="t u " style="left:600px;top:561px">Step</div>
<div class="ed" style="left:638px;top:557px;width:40px;height:19px;"><span class="v">200</span></div>
<div class="t u " style="left:685px;top:561px">mm</div>
<div class="ed" style="left:792px;top:453px;width:40px;height:19px;"><span class="v">1000</span></div>
<div class="t u " style="left:742px;top:458px">Distance</div>
<div class="t u " style="left:838px;top:458px">mm</div>
<div class="ed" style="left:798px;top:479px;width:34px;height:19px;"><span class="v">0</span></div>
<div class="t u " style="left:742px;top:484px">Angle Hor</div>
<div class="t u " style="left:838px;top:484px">deg</div>
<div class="ed" style="left:798px;top:505px;width:34px;height:19px;"><span class="v">0</span></div>
<div class="t u " style="left:742px;top:509px">Angle Ver</div>
<div class="t u " style="left:838px;top:509px">deg</div>
<div class="cb" style="left:883px;top:457px"></div>
<div class="t u " style="left:903px;top:459px">Floor Y</div>
<div class="ed" style="left:946px;top:454px;width:37px;height:19px;"><span class="v">-343</span></div>
<div class="t u " style="left:990px;top:459px">mm</div>
<div class="cb" style="left:883px;top:482px"></div>
<div class="t u " style="left:903px;top:484px">Wall&nbsp; X</div>
<div class="ed" style="left:946px;top:479px;width:37px;height:19px;"><span class="v">-35</span></div>
<div class="t u " style="left:990px;top:484px">mm</div>
<div class="t u " style="left:887px;top:509px">Absorption</div>
<div class="ed" style="left:946px;top:505px;width:37px;height:19px;"><span class="v">1.0</span></div>
<div class="t u " style="left:990px;top:509px">dB</div>
<div class="t u " style="left:736px;top:548px">Half space response</div>
<div class="bt" style="left:841px;top:541px;width:28px;height:23px"></div>
<svg class="a" style="left:846px;top:545px" width="18" height="16" viewBox="0 0 18 16"><path d="M1.5 4.5 H5.5 L6.5 5.5 H12 V14.5 H1.5Z" fill="#f8e060" stroke="#b89a20" stroke-width="1"/><path d="M3.5 8.5 H16.5 L13 14.5 H1.5Z" fill="#fff07a" stroke="#b89a20" stroke-width="1"/><path d="M9 3.5 Q12 0.5 15 2.5" fill="none" stroke="#20a040" stroke-width="2"/><path d="M13.5 0.5 L17 3 L13.5 5Z" fill="#20a040"/></svg>
<div class="bt" style="left:872px;top:541px;width:28px;height:23px"></div>
<svg class="a" style="left:878px;top:545px" width="16" height="16" viewBox="0 0 16 16"><path d="M2.5 2.5 L13.5 13.5 M13.5 2.5 L2.5 13.5" stroke="#e01010" stroke-width="3.4" stroke-linecap="round"/></svg>
<div class="cb cbd" style="left:911px;top:548px"></div>
<div class="t u dis" style="left:931px;top:549px">Full space</div>
<div class="ed" style="left:735px;top:567px;width:280px;height:19px;"></div>
<div class="cb" style="left:737px;top:593px"></div>
<div class="t u " style="left:757px;top:595px">Directivity</div>
<div class="cb cbd" style="left:817px;top:593px"></div>
<div class="t u dis" style="left:837px;top:595px">Vertical plane</div>
<div class="cb cbd" style="left:915px;top:593px"></div>
<div class="t u dis" style="left:935px;top:595px">Negative angles</div>
<div class="t u " style="left:786px;top:615px">Step</div>
<div class="ed ro" style="left:817px;top:611px;width:35px;height:20px;text-align:left;padding-left:2px"><span class="v dis">10</span></div>
<div class="t u " style="left:857px;top:615px">deg</div>
<div class="cb cbd" style="left:915px;top:615px"></div>
<div class="t u dis" style="left:935px;top:617px">Feed speaker</div>
<div class="bt" style="left:377px;top:606px;width:65px;height:23px"></div>
<div class="t u " style="left:403px;top:612px">New</div>
<svg class="a" style="left:380px;top:609px" width="18" height="18" viewBox="0 0 18 18"><path d="M7 8 L16 16.5" stroke="#303040" stroke-width="2.2" stroke-linecap="round"/><path d="M6 1 L7.3 4 L10.5 4.2 L8 6.3 L8.8 9.5 L6 7.8 L3.2 9.5 L4 6.3 L1.5 4.2 L4.7 4Z" fill="#ffd030" stroke="#e08040" stroke-width="0.9"/></svg>
<div class="a" style="left:447px;top:605px;width:67px;height:25px;border:1px solid #000"></div>
<div class="bt" style="left:448px;top:606px;width:65px;height:23px"></div>
<div class="t u " style="left:472px;top:612px">Open</div>
<svg class="a" style="left:451px;top:609px" width="18" height="16" viewBox="0 0 18 16"><path d="M1.5 4.5 H5.5 L6.5 5.5 H12 V14.5 H1.5Z" fill="#f8e060" stroke="#b89a20" stroke-width="1"/><path d="M3.5 8.5 H16.5 L13 14.5 H1.5Z" fill="#fff07a" stroke="#b89a20" stroke-width="1"/><path d="M9 3.5 Q12 0.5 15 2.5" fill="none" stroke="#20a040" stroke-width="2"/><path d="M13.5 0.5 L17 3 L13.5 5Z" fill="#20a040"/></svg>
<div class="bt" style="left:519px;top:606px;width:65px;height:23px"></div>
<div class="t u " style="left:545px;top:612px">Save</div>
<svg class="a" style="left:525px;top:609px" width="14" height="16" viewBox="0 0 14 16"><path d="M0.5 1 H13 V15.5 H0.5Z" fill="#2f6a98"/><rect x="3" y="1" width="7" height="5" fill="#e8eef4"/><rect x="7" y="2" width="2" height="3" fill="#2f6a98"/><rect x="2.5" y="9" width="9" height="6.5" fill="#f0f4f8"/><path d="M0.5 1 V15.5" stroke="#1a3a5a" stroke-width="1.5"/></svg>
<div class="bt" style="left:661px;top:606px;width:65px;height:23px"></div>
<div class="t u " style="left:685px;top:612px">Export</div>
<svg class="a" style="left:665px;top:608px" width="18" height="18" viewBox="0 0 18 18"><path d="M2.5 1.5 H9 L12.5 5 V16.5 H2.5Z" fill="#f4f4f4" stroke="#c8c8c8" stroke-width="1"/><path d="M9 1.5 V5 H12.5" fill="#a0c0a0" stroke="#60806a" stroke-width="0.8"/><path d="M5 11 H11 V8.5 L16 12.5 L11 16.5 V14 H5Z" fill="#c81020"/></svg>
</body></html>
